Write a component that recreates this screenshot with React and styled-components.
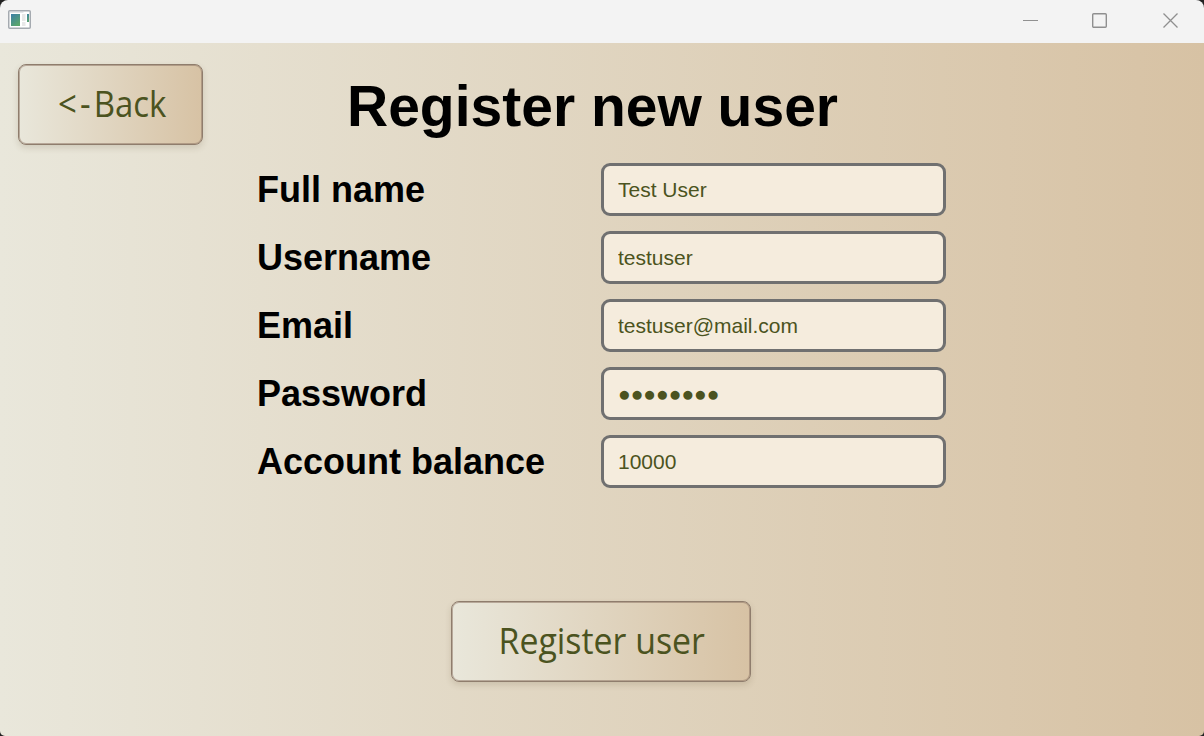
import React from "react";
import styled, { createGlobalStyle } from "styled-components";

const Global = createGlobalStyle`
  * { box-sizing: border-box; }
  body { margin: 0; background: #222; font-family: "Liberation Sans", Arial, sans-serif; }
`;
const Window = styled.div`
  width: 1204px; height: 736px; overflow: hidden;
  display: flex; flex-direction: column;
  border-radius: 8px 8px 5px 5px;
`;
const TitleBar = styled.header`
  height: 43px; flex: none; background: #f3f3f3;
  display: flex; justify-content: space-between; align-items: flex-start;
  padding: 9px 26px 0 8px;
`;
const Controls = styled.div`
  display: flex; gap: 54px; padding-top: 3px;
`;
const Body = styled.main`
  flex: 1; background: linear-gradient(to right, #e9e7db, #d7c2a4);
`;
const Top = styled.div`
  display: flex; padding: 21px 0 0 18px; height: 120px;
`;
const Button = styled.button`
  width: ${p => p.$width}px; height: 81px; padding: 0 0 2px;
  display: flex; align-items: center; justify-content: center;
  border: 1px solid #8f7d6d; border-radius: 8px;
  background: linear-gradient(to right, #e9e7db, #d7c2a4) border-box;
  box-shadow: inset 0 0 0 1px rgba(143, 120, 103, 0.55), 0 3px 6px rgba(90, 70, 40, 0.16);
  font: 36px "Open Sans", "Noto Sans", sans-serif; color: #4b5320;
  white-space: nowrap;
`;
const ButtonText = styled.span`
  display: block; transform: scaleX(${p => p.$scale}); padding-left: ${p => p.$shift || 0}px;
`;
const Arrow = styled.span`
  letter-spacing: 3.5px;
`;
const Title = styled.h1`
  margin: 7px 0 0 144px; font-size: 57px; line-height: 70px; font-weight: 700; white-space: nowrap;
`;
const Form = styled.form`
  display: grid; grid-template-columns: 344px 345px; row-gap: 15px; padding-left: 257px;
`;
const Label = styled.label`
  font-size: 36px; line-height: 53px; font-weight: 700; white-space: nowrap;
`;
const Field = styled.input`
  height: 53px; width: 345px; padding: 1px 14px 0; border: 3px solid #707070; border-radius: 9px;
  background: #f5ecdd; color: #4b5320; font: 21px "Liberation Sans", Arial, sans-serif; outline: none;
`;
const Footer = styled.div`
  padding: 113px 0 0 451px;
`;
const fields = [
  ["Full name", "Test User"], ["Username", "testuser"], ["Email", "testuser@mail.com"],
  ["Password", "●●●●●●●●"], ["Account balance", "10000"],
];

const AppIcon = () => (
  <svg width="24" height="21">
    <defs>
      <linearGradient id="pane" x1="0" y1="0" x2="0.6" y2="1">
        <stop offset="0" stopColor="#3c7fa8" />
        <stop offset="1" stopColor="#5aa56c" />
      </linearGradient>
    </defs>
    <rect x=".75" y="1.75" width="21.5" height="17.5" rx="1" fill="#fff" stroke="#a5aab0" strokeWidth="1.5" />
    <path d="M1.5 3h14" stroke="#c9cdd2" />
    <rect x="3" y="5" width="9" height="12" fill="url(#pane)" />
    <rect x="14" y="5" width="3.5" height="7" fill="#e8e8e8" />
    <rect x="14" y="13" width="3.5" height="4" fill="#e8e8e8" />
    <rect x="19" y="5" width="2" height="8" fill="url(#pane)" />
  </svg>
);

export default function App() {
  return (
    <Window>
      <Global />
      <TitleBar>
        <AppIcon />
        <Controls>
          <svg width="16" height="16" stroke="#909090"><path d="M1 8.5h15" /></svg>
          <svg width="16" height="16" fill="none" stroke="#8f8f8f" strokeWidth="1.4"><rect x=".7" y="1.7" width="13.6" height="13.6" rx="1" /></svg>
          <svg width="16" height="16" stroke="#8f8f8f" strokeWidth="1.3"><path d="M1.5 1.5l14 14M15.5 1.5L1.5 15.5" /></svg>
        </Controls>
      </TitleBar>
      <Body>
        <Top>
          <Button $width={185}><ButtonText $scale={0.915} $shift={3}><Arrow>&lt;-</Arrow>Back</ButtonText></Button>
          <Title>Register new user</Title>
        </Top>
        <Form>
          {fields.map(([label, value]) => (
            <React.Fragment key={label}>
              <Label>{label}</Label>
              <Field defaultValue={value} />
            </React.Fragment>
          ))}
        </Form>
        <Footer><Button $width={300}><ButtonText $scale={0.94} $shift={1}>Register user</ButtonText></Button></Footer>
      </Body>
    </Window>
  );
}
